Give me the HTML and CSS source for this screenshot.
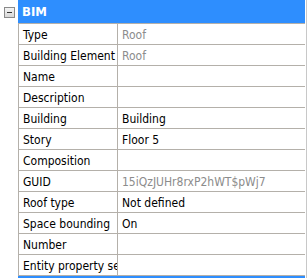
FILE: index.html
```html
<!DOCTYPE html>
<html lang="en">
<head>
    <meta charset="UTF-8">
    <title>BIM Properties</title>
    <link rel="stylesheet" href="styles.css">
</head>
<body>
    <div class="panel">
        <div class="section">
            <div class="gutter">
                <span class="toggle"><span class="minus"></span></span>
            </div>
            <div class="grid">
                <div class="header">BIM</div>
                <div class="row"><span class="key">Type</span><span class="val muted">Roof</span></div>
                <div class="row"><span class="key">Building Element Type</span><span class="val muted">Roof</span></div>
                <div class="row"><span class="key">Name</span><span class="val"></span></div>
                <div class="row"><span class="key">Description</span><span class="val"></span></div>
                <div class="row"><span class="key">Building</span><span class="val">Building</span></div>
                <div class="row"><span class="key">Story</span><span class="val">Floor 5</span></div>
                <div class="row"><span class="key">Composition</span><span class="val"></span></div>
                <div class="row"><span class="key">GUID</span><span class="val muted">15iQzJUHr8rxP2hWT$pWj7</span></div>
                <div class="row"><span class="key">Roof type</span><span class="val">Not defined</span></div>
                <div class="row"><span class="key">Space bounding</span><span class="val">On</span></div>
                <div class="row"><span class="key">Number</span><span class="val"></span></div>
                <div class="row"><span class="key">Entity property sets</span><span class="val"></span></div>
                <div class="header next"></div>
            </div>
        </div>
    </div>
</body>
</html>
```

FILE: styles.css
```css
* {
    box-sizing: border-box;
}

body {
    margin: 0;
    background: #fff;
    font-family: "DejaVu Sans Condensed", "DejaVu Sans", sans-serif;
    font-size: 12px;
    color: #000;
    overflow: hidden;
}

.panel {
    width: 307px;
    height: 278px;
    border-right: 1px solid #c8c8c8;
    overflow: hidden;
}

.section {
    display: flex;
}

.gutter {
    width: 18px;
    flex: none;
}

.toggle {
    display: flex;
    align-items: center;
    justify-content: center;
    width: 11px;
    height: 11px;
    margin: 7px 0 0 4px;
    border: 1px solid #8a8a8a;
    background: linear-gradient(#f4f4f4, #d8d8d8);
}

.minus {
    width: 5px;
    height: 1px;
    background: #333;
}

.grid {
    width: 287px;
    flex: none;
}

.header {
    height: 24px;
    padding: 4px 0 0 4px;
    background: #2e8efe;
    border-bottom: 1px solid #b4b0aa;
    color: #fff;
    font-size: 13px;
    font-weight: bold;
}

.header.next {
    height: 4px;
    border: none;
}

.row {
    display: flex;
    height: 21px;
    border-left: 1px solid #b4b0aa;
    border-bottom: 1px solid #b4b0aa;
}

.key,
.val {
    padding: 4px 0 0 4px;
    white-space: nowrap;
    overflow: hidden;
}

.key {
    width: 99px;
    flex: none;
    border-right: 1px solid #b4b0aa;
}

.val {
    flex: 1;
}

.muted {
    color: #8c8c8c;
}
```
